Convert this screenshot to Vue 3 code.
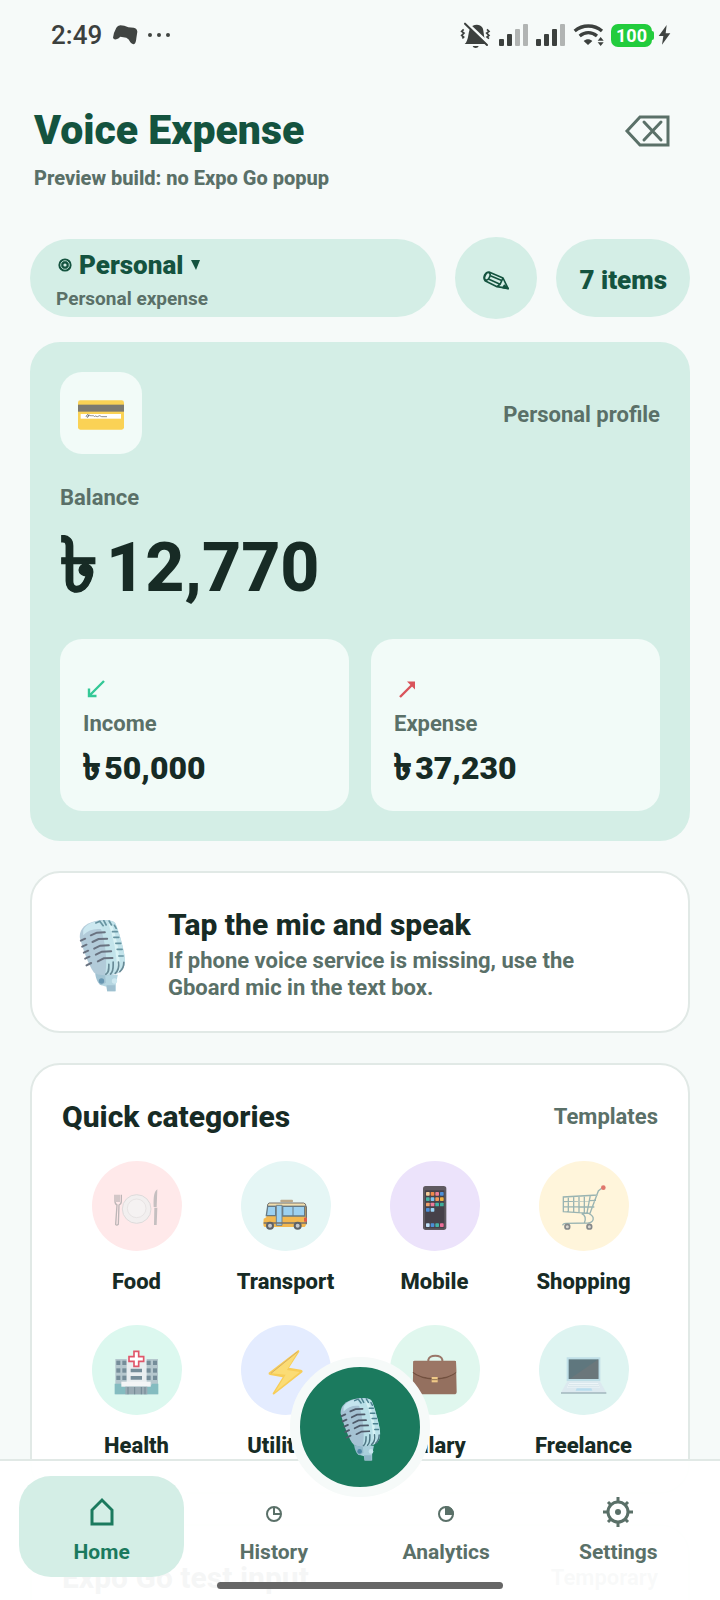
<script setup>
import { ref } from 'vue'

const active = ref('Home')
const tabs = ['Home', 'History', 'Analytics', 'Settings']
const stats = [
  { label: 'Income', amount: '50,000', kind: 'in' },
  { label: 'Expense', amount: '37,230', kind: 'out' },
]
const categories = [
  { name: 'Food', tint: 'rose' },
  { name: 'Transport', tint: 'aqua' },
  { name: 'Mobile', tint: 'violet' },
  { name: 'Shopping', tint: 'amber' },
  { name: 'Health', tint: 'mint' },
  { name: 'Utilities', tint: 'blue' },
  { name: 'Salary', tint: 'green' },
  { name: 'Freelance', tint: 'teal' },
]
const appColors = ['#f5cd9a', '#f08a4b', '#ee7f96', '#4b8fd8', '#46b3a5', '#7cc4f2', '#f29a5b', '#f0b040', '#f0a06b', '#ee7a9c', '#46b3a5', '#3fae9a', '#4b8fd8', '#9cd4f6']
const dockColors = ['#bfe0f8', '#4b8fd8', '#46b3a5', '#ee6f9a']
</script>

<template>
  <div class="app">
    <svg class="defs" aria-hidden="true">
      <symbol id="mic" viewBox="0 0 140 216">
        <path d="M78 164h38l-6 28v22H84l-2-14-20-6-10-24z" fill="#a9cfdc" />
        <path d="M82 196h26v18H84z" fill="#8fb6c8" />
        <path d="M2 52C0 28 18 10 50 3c28-6 50-3 58 6 10 20 24 72 28 98 4 30-2 46-24 54-28 8-52 8-66-2C32 146 10 86 2 52z" fill="#a5c2d3" />
        <path d="M56 4c26-6 46-2 52 6 10 20 24 70 28 97 4 30-2 45-24 53-14 4-24 5-34 4C86 120 78 50 56 4z" fill="#b9e0e8" />
        <path d="M12 30C22 12 40 5 58 4l12 24C46 24 28 30 12 46z" fill="#c4e4ee" />
        <path d="M92 10c14 36 26 90 26 146" fill="none" stroke="#d4f1f4" stroke-width="9" />
        <g fill="none" stroke="#4f5a6a" stroke-width="6" stroke-linecap="round">
          <path d="M5 62l13-6M9 80l13-6M14 98l13-6M18 116l13-6M22 136l14-7" />
          <path d="M35 46l18-8 24-1M40 66l18-9 26-1M45 86l18-9 26-1M50 104l18-9 28-1M56 124l18-9 26-1" />
        </g>
        <g fill="none" stroke="#4d8291" stroke-width="5" stroke-linecap="round">
          <path d="M50 9l12-5 10 13M74 2l7 13M90 3l7 12M100 35h14M104 52h15M110 70h15M114 88h15M119 108h13M106 16l5 9" />
          <path d="M94 162c10-8 8-22 8-36M108 160c10-8 12-20 10-34M122 155c10-8 12-16 12-28M80 163c10-6 9-16 9-30" stroke="#4e7684" />
        </g>
        <path d="M48 160c8 4 18 6 30 6l2 22-14 8c-10-4-16-20-18-36z" fill="#91b9cb" />
        <circle cx="67" cy="183" r="8" fill="#4e85a5" />
        <circle cx="106" cy="183" r="8" fill="#c5e5ee" />
      </symbol>
    </svg>

    <div class="scroller">
      <div class="status">
        <span class="time">2:49</span>
        <svg width="25" height="20" viewBox="0 0 75 60"><path d="M22 1Q14 2 10 8 2 22 0 38q2 7 10 5 6-2 12-8l18 3q8 4 12 14 5 7 12 5 5-3 6-17l3-20q-1-10-11-12L46 7 34 2z" fill="#404442" /></svg>
        <svg width="22" height="6" viewBox="0 0 22 6" fill="#404442"><circle cx="2" cy="3" r="2" /><circle cx="11" cy="3" r="2" /><circle cx="20" cy="3" r="2" /></svg>
        <span class="spring"></span>
        <svg width="31" height="27" viewBox="0 0 93 81">
          <path d="M14 66c12-10 10-34 16-46 6-12 28-18 38-2 5 12 2 36 14 48zM38 72h18c-2 8-16 8-18 0z" fill="#3c403e" />
          <path d="M10 0l74 70" stroke="#f6faf9" stroke-width="9" transform="translate(4 -3)" />
          <path d="M15 5l66 64" stroke="#3c403e" stroke-width="6" stroke-linecap="round" />
          <path d="M11 22l-6 6 7 5-7 7 6 5-4 4M81 22l6 6-7 5 7 7-6 5 6 5" fill="none" stroke="#3c403e" stroke-width="5" />
        </svg>
        <svg v-for="on in [2, 3]" :key="on" class="signal" width="29" height="24" viewBox="0 0 29 24">
          <rect v-for="n in 4" :key="n" :x="(n - 1) * 8" :y="[16, 11, 6, 1][n - 1]" width="5" :height="[7, 12, 17, 22][n - 1]" rx="1" :fill="n <= on ? '#3c403e' : '#b1b4b3'" />
        </svg>
        <svg class="wifi" width="32" height="24" viewBox="0 0 96 72">
          <path d="M5 24c24-20 58-20 82 0M20 39c16-13 36-13 52 0" fill="none" stroke="#3c403e" stroke-width="10" />
          <path d="M32 54c8-7 18-7 26 0L45 66z" fill="#3c403e" />
          <path d="M74 53l9-11 9 11zM74 58l9 11 9-11z" fill="#3c403e" />
        </svg>
        <span class="battery">100</span>
        <svg width="13" height="20" viewBox="0 0 39 60"><path d="M26 0L2 33h14l-4 26 25-34H23z" fill="#3f4341" /></svg>
      </div>

      <header class="head">
        <div>
          <h1>Voice Expense</h1>
          <p class="sub">Preview build: no Expo Go popup</p>
        </div>
        <button class="clear" aria-label="Clear">
          <svg width="46" height="34" viewBox="0 0 46 34" fill="none" stroke="#5a7068" stroke-width="3"><path d="M3 17L16 3h28v28H16z" /><path d="M20 8l17 18M37 8L20 26" stroke-linecap="round" /></svg>
        </button>
      </header>

      <div class="filters">
        <button class="profile">
          <span class="profile-name">
            <svg width="14" height="14" viewBox="0 0 14 14"><circle cx="7" cy="7" r="6.6" fill="#14533f" /><circle cx="7" cy="7" r="4.3" fill="none" stroke="#b5d8cc" /><circle cx="7" cy="7" r="1.6" fill="#d4eee6" /></svg>
            Personal
            <svg width="11" height="10" viewBox="0 0 11 10"><path d="M1 0h9L6 10z" fill="#14533f" /></svg>
          </span>
          <span class="profile-note">Personal expense</span>
        </button>
        <button class="edit" aria-label="Edit profile">
          <svg width="26" height="19" viewBox="0 0 78 57" fill="none" stroke="#14533f" stroke-width="5" stroke-linejoin="round">
            <path d="M18 3L60 21 75 52 42 47 6 29C-1 18 7 3 18 3z" /><ellipse cx="13" cy="16" rx="7" ry="12" transform="rotate(25 13 16)" /><path d="M22 14l36 15M18 25l33 15M60 21l-9 19-9 7" /><path d="M64 43l12 10-16-3z" fill="#14533f" />
          </svg>
        </button>
        <span class="count">7 items</span>
      </div>

      <section class="balance">
        <div class="balance-top">
          <span class="wallet">
            <svg width="46" height="30" viewBox="0 0 138 90">
              <rect width="138" height="88" y="1" rx="7" fill="#fad255" /><rect y="14" width="138" height="21" fill="#7c7a70" /><rect x="8" y="42" width="121" height="14" fill="#fff" />
              <path d="M24 50c3-9 9-8 8-2s-8 5-4 0l8-3c4 8 5-3 8 3 3-4 4 5 8 0l6 2 7-3 6 3h16" fill="none" stroke="#555" stroke-width="2" />
            </svg>
          </span>
          <span class="muted">Personal profile</span>
        </div>
        <p class="muted balance-label">Balance</p>
        <p class="total"><span class="taka">৳</span>12,770</p>
        <div class="stats">
          <div v-for="s in stats" :key="s.label" class="stat">
            <span class="arrow">
              <svg width="18" height="18" viewBox="0 0 18 18" fill="none" stroke-width="2.4">
                <path v-if="s.kind === 'in'" d="M17 1L3 15M2 8.500v7.500h7.500" stroke="#34c896" />
                <g v-else stroke="#d9545b"><path d="M2 17L14 5" /><path d="M9 1.500h8v8z" fill="#d9545b" stroke="none" /></g>
              </svg>
            </span>
            <span class="muted">{{ s.label }}</span>
            <strong><span class="taka">৳</span>{{ s.amount }}</strong>
          </div>
        </div>
      </section>

      <section class="card tip">
        <svg class="tip-mic" width="47" height="72"><use href="#mic" /></svg>
        <div>
          <h2>Tap the mic and speak</h2>
          <p class="tip-text">If phone voice service is missing, use the Gboard mic in the text box.</p>
        </div>
      </section>

      <section class="card">
        <div class="card-head">
          <h2>Quick categories</h2>
          <span class="muted">Templates</span>
        </div>
        <div class="grid">
          <button v-for="c in categories" :key="c.name" class="category">
            <span class="disc" :class="c.tint">
              <svg viewBox="0 0 270 270">
                <template v-if="c.name === 'Food'">
                  <circle cx="134" cy="144" r="43" fill="#f2efef" stroke="#dedbdb" stroke-width="3" /><circle cx="134" cy="142" r="28" fill="#f5f2f2" stroke="#e8e4e4" stroke-width="3" />
                  <path d="M69 101v20c0 8 3 10 6 11l-4 58q3 5 8 0l2-58c5-2 7-5 7-11v-20M75 101v22M81 101v22" fill="none" stroke="#bdb6b7" stroke-width="4" />
                  <path d="M196 85c-9 6-12 20-11 53h9zM187 140h9l-2 52h-8z" fill="#c5bfc0" />
                </template>
                <template v-else-if="c.name === 'Transport'">
                  <rect x="118" y="116" width="38" height="8" rx="3" fill="#bba98b" />
                  <path d="M84 126h104q7 1 7 10v52q0 10-8 10H72q-5 0-5-9l1-16 8-4 4-33q1-9 4-10z" fill="#f3b84f" />
                  <path d="M84 126h104q7 1 7 10H79q1-9 5-10z" fill="#f2dfae" stroke="#77736f" stroke-width="3" />
                  <path d="M80 136h24v28H76zM125 136h66v29h-66z" fill="#9dd1f0" stroke="#667983" stroke-width="4" /><path d="M156 136v29" stroke="#667983" stroke-width="3" />
                  <path d="M106 133h17v60h-17z" fill="#9dd1f0" stroke="#72838b" stroke-width="3" />
                  <path d="M68 186h128M196 136v54" stroke="#77736f" stroke-width="4" /><path d="M189 170h9v12h-9z" fill="#df5b49" />
                  <g fill="#c7c9cb" stroke="#5e6267" stroke-width="6"><circle cx="87" cy="194" r="9" /><circle cx="170" cy="194" r="9" /></g>
                </template>
                <template v-else-if="c.name === 'Mobile'">
                  <rect x="99" y="75" width="70" height="132" rx="8" fill="#5f5a60" /><rect x="105" y="88" width="58" height="114" fill="#464149" />
                  <rect v-for="(f, i) in appColors" :key="i" :x="108 + (i % 4) * 14" :y="93 + Math.floor(i / 4) * 16" width="11" height="11" rx="2" :fill="f" />
                  <rect v-for="(f, i) in dockColors" :key="f" :x="108 + i * 14" y="187" width="11" height="11" rx="2" :fill="f" />
                </template>
                <template v-else-if="c.name === 'Shopping'">
                  <g fill="none" stroke="#9ab4b2" stroke-width="4">
                    <path d="M188 82l-10 8-25 67-80-5v-44l103-6M73 122l98-4M73 137l93 1M88 107v46M104 106v48M120 105v50M136 104v52M154 103l-10 53M128 158c14 6 12 18 8 28M150 158c20 10 14 26-2 28l-68 1q-8 0-9 6" />
                  </g>
                  <circle cx="193" cy="80" r="7" fill="#e0766c" />
                  <g fill="#d9d6cf" stroke="#86898a" stroke-width="5"><circle cx="85" cy="197" r="7" /><circle cx="151" cy="197" r="7" /></g>
                </template>
                <template v-else-if="c.name === 'Health'">
                  <path d="M70 102h36v106H70zM162 102h36v106h-36z" fill="#b5c7cd" /><path d="M104 102h60v82h-60z" fill="#e9eef0" />
                  <path d="M68 176h20l4 8h84l4-8h19v32H68z" fill="#84bcc0" /><path d="M88 170h88v15H88z" fill="#f3f5f6" /><path d="M100 185h66v23h-66z" fill="#99aab3" />
                  <path d="M108 186v22M128 186v22M148 186v22M159 186v22" stroke="#728994" stroke-width="3" />
                  <g fill="#758d99"><template v-for="y in [107, 130, 152]" :key="y"><path v-for="x in [73, 91, 164, 183]" :key="x" :d="`M${x} ${y}h12v13h-12z`" /></template><path d="M116 131h34v11h-34zM116 153h34v11h-34z" /></g>
                  <path d="M126 79h14v16h15v14h-15v15h-14v-15h-15V95h15z" fill="#fff" stroke="#e0566a" stroke-width="5" />
                </template>
                <template v-else-if="c.name === 'Utilities'">
                  <path d="M172 75L83 143q-2 5 4 7l38 7-30 48q0 5 5 3l84-66q3-6-4-8l-36-6 31-48q0-5-3-5z" fill="#f7cd58" /><path d="M170 80l-80 65 44 4-32 52 74-60-38-6z" fill="#fbdc75" /><path d="M170 80l-80 65" stroke="#d7ae62" stroke-width="3" />
                </template>
                <template v-else-if="c.name === 'Salary'">
                  <path d="M115 110v-6q3-12 21-12t21 12v6" fill="none" stroke="#9a7769" stroke-width="6" />
                  <path d="M70 110q0-3 4-3h120q4 0 4 3l2 90q0 8-8 8H75q-7 0-7-8z" fill="#94705f" />
                  <path d="M69 142q20 18 65 20 45-2 64-20" fill="none" stroke="#72503f" stroke-width="4" /><path d="M70 109h128l1 31q-20 17-65 19-45-2-65-19z" fill="#9b7665" />
                  <path d="M125 156h18v16h-18z" fill="#efc887" /><path d="M125 164h18" stroke="#91724f" stroke-width="3" />
                </template>
                <template v-else>
                  <path d="M83 97h101v72H83z" fill="#bfdfe7" /><path d="M89 103h89v59H89z" fill="#5f777e" /><path d="M178 103v59H92z" fill="#6b777b" />
                  <path d="M85 169h98l19 34H66z" fill="#dce9ef" /><path d="M91 174h86l6 14H84z" fill="#edf5f8" /><path d="M90 179h89M87 185h94" stroke="#cbdbe3" stroke-width="2" /><path d="M113 190h44l3 7h-50z" fill="#b8dcee" /><path d="M66 204h136" stroke="#8299a3" stroke-width="3" />
                </template>
              </svg>
            </span>
            <span class="category-name">{{ c.name }}</span>
          </button>
        </div>
      </section>

      <section class="card">
        <div class="card-head">
          <h2>Expo Go test input</h2>
          <span class="muted">Temporary</span>
        </div>
      </section>
    </div>

    <nav class="nav">
      <button v-for="t in tabs" :key="t" class="tab" :class="{ on: active === t }" @click="active = t">
        <svg width="36" height="36" viewBox="0 0 36 36" fill="none" stroke="currentColor" stroke-width="3">
          <path v-if="t === 'Home'" d="M8 30V16L18 6l10 10v14z" />
          <g v-else-if="t === 'History'" stroke-width="2"><circle cx="18" cy="20" r="7" /><path d="M18 13v7h7" /></g>
          <g v-else-if="t === 'Analytics'" stroke-width="2"><circle cx="18" cy="20" r="7" /><path d="M18 13v7h7a7 7 0 0 0-7-7z" fill="currentColor" /></g>
          <g v-else>
            <circle cx="18" cy="18" r="10" /><circle cx="18" cy="18" r="3" fill="currentColor" stroke="none" />
            <path d="M18 3v5M18 28v5M3 18h5M28 18h5M8 8l3 3M25 25l3 3M8 28l3-3M25 11l3-3" />
          </g>
        </svg>
        <span>{{ t }}</span>
      </button>
      <button class="record" aria-label="Record expense"><svg width="41" height="63"><use href="#mic" /></svg></button>
      <span class="gesture"></span>
    </nav>
  </div>
</template>

<style>
body { margin: 0; background: #f6faf9; }
</style>

<style scoped>
.app { position: relative; height: 100vh; overflow: hidden; background: #f6faf9; color: #172b25; font-family: Roboto, "Noto Sans", "Liberation Sans", sans-serif; }
.app * { box-sizing: border-box; }
.defs { position: absolute; width: 0; height: 0; }
svg { display: block; flex: none; }
h1, h2, p { margin: 0; }
button { border: 0; padding: 0; background: none; font: inherit; color: inherit; cursor: pointer; }
.scroller { height: 100%; padding: 0 30px 170px; overflow-y: auto; scrollbar-width: none; }
.status { display: flex; align-items: center; height: 70px; padding: 0 19px 0 21px; }
.time { margin-right: 11px; font-size: 26px; font-weight: 500; line-height: 36px; color: #3c403e; }
.status .time + svg { margin-right: 10px; }
.spring { flex: 1; }
.signal { margin-left: 8px; }
.wifi { margin: 0 6px 0 8px; }
.battery { position: relative; width: 41px; height: 23px; margin-right: 6px; border-radius: 7px; background: #22cc3d; color: #fff; font-size: 18px; font-weight: 700; line-height: 24px; text-align: center; }
.battery::after { content: ""; position: absolute; top: 7px; right: -2px; width: 4px; height: 9px; border-radius: 2px; background: #22cc3d; }
.head { display: flex; justify-content: space-between; align-items: flex-start; margin-top: 36px; padding: 0 20px 0 4px; }
h1 { font-size: 41px; font-weight: 900; line-height: 48px; color: #14533f; }
.sub { margin-top: 12px; font-size: 20px; font-weight: 800; line-height: 24px; color: #5a7068; }
.clear { margin-top: 8px; }
.filters { display: flex; align-items: center; gap: 19px; margin-top: 47px; }
.profile { flex: 1; display: flex; flex-direction: column; height: 78px; padding: 8px 26px 0; border-radius: 39px; background: #d4eee6; text-align: left; }
.profile-name { display: flex; align-items: center; gap: 7px; padding-left: 2px; font-size: 26px; font-weight: 900; line-height: 36px; color: #14533f; }
.profile-note { font-size: 19px; font-weight: 700; line-height: 32px; color: #5a7068; }
.edit { display: grid; place-items: center; width: 82px; height: 82px; padding-top: 4px; border-radius: 50%; background: #d4eee6; }
.count { height: 78px; padding: 0 23px; border-radius: 39px; background: #d4eee6; color: #14533f; font-size: 26px; font-weight: 900; line-height: 82px; }
.balance { margin-top: 23px; padding: 30px; border-radius: 30px; background: #d4eee6; }
.balance-top, .card-head { display: flex; justify-content: space-between; align-items: center; }
.wallet { display: grid; place-items: center; width: 82px; height: 82px; padding-top: 4px; border-radius: 22px; background: #f2fbf8; }
.muted { font-size: 22px; font-weight: 700; line-height: 26px; color: #5a7068; }
.balance-top .muted { padding-top: 4px; }
.balance-label { margin-top: 31px; }
.total { margin-top: 17px; font-size: 68px; font-weight: 800; line-height: 80px; }
.taka { margin-right: 0.12em; font-size: 1.1em; line-height: 0; -webkit-text-stroke: 1px currentColor; }
.stats { display: grid; grid-template-columns: 1fr 1fr; gap: 22px; margin-top: 31px; }
.stat { display: flex; flex-direction: column; padding: 28px 23px 24px; border-radius: 22px; background: #f2fbf8; }
.arrow { display: flex; align-items: center; height: 44px; padding-left: 4px; }
.stat strong { margin-top: 12px; font-size: 32px; font-weight: 900; line-height: 38px; }
.card { margin-top: 30px; padding: 34px 30px 32px; border: 2px solid #e1e9e6; border-radius: 30px; background: #fff; }
h2 { font-size: 30px; font-weight: 800; line-height: 36px; }
.tip { display: flex; align-items: center; gap: 42px; padding: 34px 64px 30px 47px; }
.tip-text { margin-top: 4px; font-size: 22px; font-weight: 700; line-height: 27px; color: #5a7068; }
.tip-mic { margin-top: 4px; opacity: 0.85; }
.card-head { min-height: 36px; }
.grid { display: grid; grid-template-columns: repeat(4, 1fr); row-gap: 29px; margin-top: 26px; }
.category { display: flex; flex-direction: column; align-items: center; gap: 17px; }
.disc { width: 90px; height: 90px; border-radius: 50%; }
.category-name { font-size: 22px; font-weight: 800; line-height: 28px; }
.rose { background: #ffe9ea; }
.aqua { background: #e5f6f5; }
.violet { background: #ece3fb; }
.amber { background: #fff5db; }
.mint { background: #dcf8ef; }
.blue { background: #e4ecff; }
.green { background: #e0f7ee; }
.teal { background: #def4f1; }
.nav { position: absolute; left: 0; right: 0; bottom: 0; display: grid; grid-template-columns: repeat(4, 1fr); gap: 7px; padding: 15px 19px 23px; border-top: 2px solid #e1e9e6; background: rgba(255, 255, 255, 0.96); }
.tab { display: flex; flex-direction: column; align-items: center; gap: 10px; padding: 18px 0 13px; border-radius: 32px; color: #5a7068; font-size: 21px; font-weight: 700; line-height: 24px; }
.tab.on { background: #d4eee6; color: #1b7a5e; }
.record { position: absolute; left: 50%; bottom: 103px; display: grid; place-items: center; width: 140px; height: 140px; padding-top: 4px; margin-left: -70px; border: 10px solid #f6faf9; border-radius: 50%; background: #1b7a5e; }
.gesture { position: absolute; left: 50%; bottom: 11px; width: 286px; height: 7px; margin-left: -143px; border-radius: 4px; background: #666; }
</style>
